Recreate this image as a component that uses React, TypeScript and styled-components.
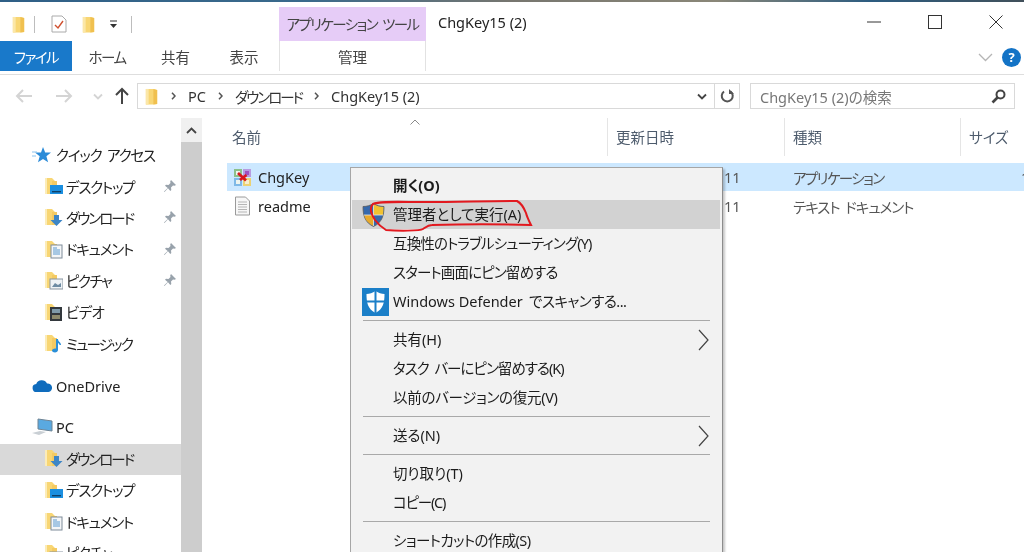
import React from "react";
import styled, { createGlobalStyle } from "styled-components";

const GlobalStyle = createGlobalStyle`
  html, body {
    margin: 0;
    padding: 0;
    background: #fff;
  }
`;

const Page = styled.div`
  position: relative;
  width: 1024px;
  height: 552px;
  overflow: hidden;
  background: #fff;
  color: #222;
  font-family: "Noto Sans", "Noto Sans CJK JP", sans-serif;
  font-size: 14.5px;
  font-feature-settings: "palt";
  filter: blur(0.3px);
`;

// katakana in the reference font runs narrower than Noto CJK, even with palt
const Tight = styled.span<{ $by: number }>`
  letter-spacing: ${(p) => -p.$by}px;
  word-spacing: 3px;
`;

const TopStrip = styled.div`
  height: 2px;
  background: linear-gradient(90deg, #2f5f86 0%, #3a6a8c 30%, #77766f 50%, #8a8778 70%, #2c5c80 85%, #41505a 100%);
`;

const TitleBar = styled.div`
  display: flex;
  align-items: flex-start;
  height: 39px;
`;

const QuickBar = styled.div`
  display: flex;
  align-items: center;
  width: 279px;
  height: 34px;
  margin-top: 5px;
  padding-left: 10px;
  box-sizing: border-box;
`;

const VLine = styled.span<{ $left: number }>`
  width: 1px;
  height: 17px;
  margin-left: ${(p) => p.$left}px;
  background: #bdbdbd;
`;

const QuickIcon = styled.span<{ $left: number }>`
  display: flex;
  margin-left: ${(p) => p.$left}px;
`;

const ToolTab = styled.div`
  width: 147px;
  height: 34px;
  margin-top: 5px;
  padding-bottom: 2px;
  box-sizing: border-box;
  display: flex;
  align-items: center;
  justify-content: center;
  background: #e6ccf7;
  color: #444;
  white-space: nowrap;
`;

const WindowTitle = styled.div`
  flex: 1;
  margin: 10px 0 0 12px;
  line-height: 20px;
`;

const WindowButtons = styled.div`
  display: flex;
  align-items: center;
  gap: 47px;
  height: 28px;
  margin: 6px 21px 0 0;
`;

const RibbonRow = styled.div`
  display: flex;
  height: 33px;
  border-bottom: 1px solid #dedede;
`;

const FileTab = styled.div`
  width: 72px;
  height: 30px;
  display: flex;
  align-items: center;
  justify-content: center;
  background: #1979ca;
  color: #fff;
`;

const RibbonTab = styled.div<{ $width: number }>`
  width: ${(p) => p.$width}px;
  height: 30px;
  display: flex;
  align-items: center;
  justify-content: center;
  color: #444;
`;

const ManageTab = styled(RibbonTab)`
  background: #fff;
  border-left: 1px solid #e2e2e2;
  border-right: 1px solid #e2e2e2;
  box-sizing: content-box;
`;

const RibbonEnd = styled.div`
  flex: 1;
  display: flex;
  justify-content: flex-end;
  align-items: center;
  gap: 9px;
  height: 32px;
  padding-right: 3px;
`;

const HelpDot = styled.div`
  width: 19px;
  height: 19px;
  border-radius: 50%;
  background: #1373c6;
  color: #fff;
  font-size: 13px;
  font-weight: 700;
  line-height: 19px;
  text-align: center;
`;

const AddressRow = styled.div`
  display: flex;
  align-items: center;
  height: 26px;
  margin-top: 8px;
  padding-left: 15px;
`;

const NavButton = styled.span<{ $width: number }>`
  width: ${(p) => p.$width}px;
  display: flex;
`;

const AddressBox = styled.div`
  width: 603px;
  height: 26px;
  box-sizing: border-box;
  border: 1px solid #d9d9d9;
  display: flex;
  align-items: center;
  padding-left: 5px;
  color: #333;
`;

const Crumbs = styled.div`
  flex: 1;
  display: flex;
  align-items: center;
  gap: 12px;
  margin-left: 11px;
`;

const AddressTail = styled.div`
  display: flex;
  align-items: center;
  height: 100%;
`;

const TailCell = styled.span<{ $line?: boolean }>`
  display: flex;
  align-items: center;
  justify-content: center;
  height: 100%;
  width: 24px;
  border-left: ${(p) => (p.$line ? "1px solid #d9d9d9" : "none")};
`;

const SearchBox = styled.div`
  width: 265px;
  height: 26px;
  box-sizing: border-box;
  margin-left: 10px;
  border: 1px solid #d9d9d9;
  display: flex;
  align-items: center;
  justify-content: space-between;
  padding: 0 8px 0 9px;
  color: #777;
`;

const Body = styled.div`
  display: flex;
  height: 434px;
  margin-top: 9px;
`;

const Sidebar = styled.div`
  width: 181px;
  padding-top: 22px;
  box-sizing: border-box;
  flex-shrink: 0;
`;

const NavRow = styled.div<{ $depth: number; $gap?: number; $selected?: boolean }>`
  display: flex;
  align-items: center;
  height: 31.4px;
  box-sizing: border-box;
  padding-bottom: 2px;
  margin-top: ${(p) => p.$gap ?? 0}px;
  padding-left: ${(p) => (p.$depth ? 44 : 32)}px;
  background: ${(p) => (p.$selected ? "#d9d9d9" : "transparent")};
  white-space: nowrap;
`;

const NavIcon = styled.span<{ $depth: number }>`
  display: flex;
  width: ${(p) => (p.$depth ? 22 : 24)}px;
`;

const PinMark = styled.span`
  display: flex;
  margin-left: auto;
  margin-right: 4px;
`;

const Track = styled.div`
  width: 21px;
  flex-shrink: 0;
  background: #cdcdcd;
`;

const TrackButton = styled.div`
  height: 24px;
  background: #f0f0f0;
  display: flex;
  align-items: center;
  justify-content: center;
`;

const Content = styled.div`
  flex: 1;
  min-width: 0;
  position: relative;
`;

const HeaderRow = styled.div`
  display: flex;
  height: 38px;
  margin-left: 22px;
  color: #4d5b6c;
`;

const HeaderCell = styled.div<{ $width: number }>`
  width: ${(p) => p.$width}px;
  box-sizing: border-box;
  padding-left: 8px;
  line-height: 38px;
  border-right: 1px solid #e5e5e5;
  flex-shrink: 0;
  position: relative;
  &:last-child {
    border-right: none;
  }
`;

const SortMark = styled.span`
  position: absolute;
  top: 1px;
  left: 186px;
  display: flex;
`;

const FileList = styled.div`
  margin: 7px 0 0 25px;
`;

const FileRow = styled.div<{ $selected?: boolean }>`
  display: flex;
  align-items: center;
  height: 28px;
  margin-bottom: 1px;
  background: ${(p) => (p.$selected ? "#cce8ff" : "transparent")};
  white-space: nowrap;
`;

const NameCell = styled.div`
  width: 381px;
  display: flex;
  align-items: center;
  gap: 6px;
  padding-left: 6px;
  box-sizing: border-box;
`;

const FileCell = styled.div<{ $width: number; $pad: number }>`
  width: ${(p) => p.$width}px;
  padding-left: ${(p) => p.$pad}px;
  box-sizing: border-box;
  color: #555;
  overflow: hidden;
`;

const Menu = styled.div`
  position: absolute;
  left: 350px;
  top: 167px;
  width: 373px;
  height: 392px;
  box-sizing: border-box;
  padding: 3px 1px;
  background: #f2f2f2;
  border: 1px solid #a6a6a6;
  border-right-color: #8c8c8c;
  box-shadow: 2px 2px 2px rgba(0, 0, 0, 0.22);
  color: #1c1c1c;
`;

const MenuItem = styled.div<{ $active?: boolean; $bold?: boolean }>`
  display: flex;
  align-items: center;
  height: 29px;
  box-sizing: border-box;
  padding-bottom: 2px;
  margin-right: 1px;
  padding-left: 41px;
  position: relative;
  background: ${(p) => (p.$active ? "#d2d2d2" : "transparent")};
  font-weight: ${(p) => (p.$bold ? 700 : 400)};
  white-space: nowrap;
`;

const MenuIcon = styled.span`
  position: absolute;
  left: 10px;
  top: 50%;
  transform: translateY(-50%);
  display: flex;
`;

const MenuArrow = styled.span`
  position: absolute;
  right: 11px;
  top: 50%;
  transform: translateY(-50%);
  display: flex;
`;

const MenuLine = styled.div`
  height: 9px;
  display: flex;
  align-items: center;
  padding: 0 11px;
  &::after {
    content: "";
    flex: 1;
    height: 1px;
    background: #a9a9a9;
  }
`;

const RedMark = styled.svg`
  position: absolute;
  left: 16px;
  top: 29px;
  pointer-events: none;
`;

const FolderIcon = ({ size = 17 }: { size?: number }) => (
  <svg width={size} height={size} viewBox="0 0 16 18">
    <path d="M2 1h8l4 1v15l-4 0.5H2z" fill="#f8d674" />
    <path d="M2 1h3v16.5H2z" fill="#fbe7a8" />
    <path d="M10 1l4 1v15l-4 0.5z" fill="#f0c04f" />
  </svg>
);

type Kind = "desktop" | "download" | "docs" | "pics" | "video" | "music";

const KnownFolder = ({ kind }: { kind: Kind }) => (
  <svg width="19" height="20" viewBox="0 0 19 20">
    <path d="M1 2h7l3 3h-3v13H1z" fill="#f8d674" />
    <path d="M1 2h2v16H1z" fill="#fcecb8" />
    <path d="M8 5h5v13H8z" fill="#f4ca62" />
    {kind === "desktop" && (
      <>
        <rect x="6" y="9" width="13" height="9" fill="#1b8fe0" />
        <rect x="8" y="15" width="9" height="1.4" fill="#0f3f66" />
      </>
    )}
    {kind === "download" && <path d="M10 8h5v5h3.500l-6 6-6-6H10z" fill="#3d86c6" />}
    {kind === "docs" && (
      <>
        <rect x="7" y="6" width="11" height="13" fill="#f4f6f8" stroke="#7f8c99" />
        <path d="M9 9h4M9 11h7M9 13h7M9 15h7" stroke="#5a9ad0" />
      </>
    )}
    {kind === "pics" && (
      <>
        <rect x="6" y="9" width="13" height="10" fill="#eef2f5" stroke="#8a96a1" />
        <path d="M8 17l3-4 3 2 3-2v4z" fill="#6d8ba3" />
      </>
    )}
    {kind === "video" && (
      <>
        <rect x="6" y="5" width="12" height="14" fill="#33383d" />
        <rect x="8" y="7" width="8" height="4" fill="#7f9aa9" />
        <rect x="8" y="13" width="8" height="4" fill="#8d8a6c" />
      </>
    )}
    {kind === "music" && (
      <path d="M12 6h2c0 3 3 3 3 6h-1.500c0-1-1-1.600-1.500-2v7c0 1.500-1.500 2.500-3 2.500S8 18.500 8 17.500s1.500-2 3-2c.4 0 .7 0 1 .1z" fill="#2a8fd8" />
    )}
  </svg>
);

const Pin = () => (
  <svg width="14" height="14" viewBox="0 0 14 14">
    <path d="M8 1l5 5-1.500.8-1.500-.3-2 2 .3 2.500-1 1-2.300-2.700L1.500 13 1 12.500l3.700-3.500L2 6.700l1-1 2.500.3 2-2-.3-1.500z" fill="#98a2ab" />
  </svg>
);

const Chevron = ({ color = "#555" }: { color?: string }) => (
  <svg width="10" height="7" viewBox="0 0 10 7">
    <path d="M1 1.500l4 4 4-4" fill="none" stroke={color} strokeWidth="1.800" />
  </svg>
);

const CrumbArrow = () => (
  <svg width="5" height="8" viewBox="0 0 5 8">
    <path d="M1 0.800L4 4 1 7.200" fill="none" stroke="#555" strokeWidth="1.500" />
  </svg>
);

const ArrowIcon = ({ dir, color }: { dir: "left" | "right" | "up"; color: string }) => {
  const r = dir === "left" ? 180 : dir === "up" ? -90 : 0;
  return (
    <svg width="18" height="16" viewBox="0 0 18 16" style={{ transform: `rotate(${r}deg)` }}>
      <path d="M1 8h15M10 2l6 6-6 6" fill="none" stroke={color} strokeWidth="2" />
    </svg>
  );
};

const Shield = () => (
  <svg width="23" height="25" viewBox="0 0 23 25">
    <path d="M11.500 1C8 3 5 4 1 4c0 9 2 16 10.500 20C20 20 22 13 22 4c-4 0-7.500-1-10.500-3z" fill="#3569ad" stroke="#5b5b5b" strokeWidth="0.800" />
    <path d="M11.500 1.500c3 2 6.500 2.800 10 3 0 2.800-.2 5.400-.7 8H11.500z" fill="#f2c230" />
    <path d="M11.500 12.500H2.200c1 4.800 3.500 8.300 9.300 11z" fill="#e8a92b" />
    <path d="M11.500 1.500v22M2 12.500h19" stroke="#e9e9e9" strokeWidth="0.800" />
  </svg>
);

const Defender = () => (
  <svg width="27" height="28" viewBox="0 0 27 28">
    <rect width="27" height="28" fill="#1b7fc8" />
    <path d="M13.500 3c3 2 6 3 9 3 0 8-1 15-9 19-8-4-9-11-9-19 3 0 6-1 9-3z" fill="#fff" />
    <path d="M13.500 2v24M3 13.500h21" stroke="#1b7fc8" strokeWidth="2" />
  </svg>
);

const AppIcon = () => (
  <svg width="19" height="19" viewBox="0 0 19 19">
    <rect x="1" y="1" width="8" height="8" fill="#8cc08a" />
    <rect x="10" y="1" width="8" height="8" fill="#b79be0" />
    <rect x="1" y="10" width="8" height="8" fill="#7fb9e6" />
    <rect x="10" y="10" width="8" height="8" fill="#ecd273" />
    <rect x="3" y="3" width="4" height="4" fill="#eef4ee" />
    <rect x="12" y="3" width="4" height="4" fill="#a14fc0" />
    <rect x="3" y="12" width="4" height="4" fill="#eef4ee" />
    <rect x="12" y="12" width="4" height="4" fill="#f6efcf" />
    <path d="M5 5l8 7.500M13.500 7L7 12" stroke="#d8161d" strokeWidth="2.800" fill="none" />
  </svg>
);

const TextFile = () => (
  <svg width="19" height="20" viewBox="0 0 19 20">
    <path d="M2.500 1h10l4 4v14h-14z" fill="#f7f7f7" stroke="#9a9a9a" />
    <path d="M5 6h9M5 8.500h9M5 11h9M5 13.500h9M5 16h9" stroke="#b5b5b5" />
  </svg>
);

const Caret = () => (
  <svg width="11" height="22" viewBox="0 0 11 22">
    <path d="M1 1l9 10-9 10" fill="none" stroke="#444" strokeWidth="1.200" />
  </svg>
);

const quickItems: { label: string; kind: Kind; tight: number; pin?: boolean }[] = [
  { label: "デスクトップ", kind: "desktop", tight: 1.2, pin: true },
  { label: "ダウンロード", kind: "download", tight: 2, pin: true },
  { label: "ドキュメント", kind: "docs", tight: 1.2, pin: true },
  { label: "ピクチャ", kind: "pics", tight: 1.5, pin: true },
  { label: "ビデオ", kind: "video", tight: 0.7 },
  { label: "ミュージック", kind: "music", tight: 1.8 },
];

const pcItems: { label: string; kind: Kind; tight: number; selected?: boolean }[] = [
  { label: "ダウンロード", kind: "download", tight: 2, selected: true },
  { label: "デスクトップ", kind: "desktop", tight: 1.2 },
  { label: "ドキュメント", kind: "docs", tight: 1.2 },
  { label: "ピクチャ", kind: "pics", tight: 1.5 },
];

const App = () => {
  return (
    <Page>
      <GlobalStyle />
      <TopStrip />
      <TitleBar>
        <QuickBar>
          <FolderIcon />
          <VLine $left={7} />
          <QuickIcon $left={16}>
            <svg width="16" height="18" viewBox="0 0 16 18">
              <path d="M1 1h10l4 4v12H1z" fill="#fff" stroke="#aaa" />
              <path d="M4 10l3 3 5-7" fill="none" stroke="#d0502f" strokeWidth="1.400" />
            </svg>
          </QuickIcon>
          <QuickIcon $left={13}>
            <FolderIcon />
          </QuickIcon>
          <QuickIcon $left={12}>
            <svg width="9" height="8" viewBox="0 0 9 8">
              <path d="M1 1h7" stroke="#333" />
              <path d="M1 4h7L4.500 8z" fill="#333" />
            </svg>
          </QuickIcon>
          <VLine $left={13} />
        </QuickBar>
        <ToolTab>
          <Tight $by={1.6}>アプリケーション ツール</Tight>
        </ToolTab>
        <WindowTitle>ChgKey15 (2)</WindowTitle>
        <WindowButtons>
          <svg width="14" height="14" viewBox="0 0 14 14">
            <path d="M0 7h14" stroke="#333" />
          </svg>
          <svg width="14" height="14" viewBox="0 0 14 14">
            <rect x="0.500" y="0.500" width="13" height="13" fill="none" stroke="#333" />
          </svg>
          <svg width="14" height="14" viewBox="0 0 14 14">
            <path d="M0.500 0.500l13 13M13.500 0.500l-13 13" stroke="#333" />
          </svg>
        </WindowButtons>
      </TitleBar>
      <RibbonRow>
        <FileTab>
          <Tight $by={1.5}>ファイル</Tight>
        </FileTab>
        <RibbonTab $width={70}>
          <Tight $by={1.5}>ホーム</Tight>
        </RibbonTab>
        <RibbonTab $width={67}>共有</RibbonTab>
        <RibbonTab $width={70}>表示</RibbonTab>
        <ManageTab $width={145}>管理</ManageTab>
        <RibbonEnd>
          <svg width="15" height="9" viewBox="0 0 15 9">
            <path d="M1 1l6.500 6.500L14 1" fill="none" stroke="#b5b5b5" strokeWidth="1.300" />
          </svg>
          <HelpDot>?</HelpDot>
        </RibbonEnd>
      </RibbonRow>
      <AddressRow>
        <NavButton $width={40}>
          <ArrowIcon dir="left" color="#d4d4d4" />
        </NavButton>
        <NavButton $width={38}>
          <ArrowIcon dir="right" color="#d4d4d4" />
        </NavButton>
        <NavButton $width={20}>
          <Chevron color="#d4d4d4" />
        </NavButton>
        <NavButton $width={24}>
          <ArrowIcon dir="up" color="#444" />
        </NavButton>
        <AddressBox>
          <FolderIcon />
          <Crumbs>
            <CrumbArrow />
            <span>PC</span>
            <CrumbArrow />
            <Tight $by={2}>ダウンロード</Tight>
            <CrumbArrow />
            <span>ChgKey15 (2)</span>
          </Crumbs>
          <AddressTail>
            <TailCell>
              <Chevron color="#444" />
            </TailCell>
            <TailCell $line>
              <svg width="15" height="15" viewBox="0 0 15 15">
                <path d="M4 2.500a5.500 5.500 0 1 0 6.500 0" fill="none" stroke="#555" strokeWidth="2" />
                <path d="M9 0v5h5z" fill="#555" />
              </svg>
            </TailCell>
          </AddressTail>
        </AddressBox>
        <SearchBox>
          <span>ChgKey15 (2)の検索</span>
          <svg width="15" height="15" viewBox="0 0 15 15">
            <circle cx="9.500" cy="5.500" r="4" fill="none" stroke="#444" strokeWidth="2" />
            <path d="M6.500 8.500L1.500 13.500" stroke="#444" strokeWidth="2.600" />
          </svg>
        </SearchBox>
      </AddressRow>
      <Body>
        <Sidebar>
          <NavRow $depth={0}>
            <NavIcon $depth={0}>
              <svg width="19" height="18" viewBox="0 0 19 18">
                <path d="M11 1l2.200 5.500H19l-4.600 3.700 1.700 6L11 13l-5 3.200 1.700-6L3 6.500h6z" fill="#2b8bd8" />
                <path d="M0 6h5M0 10h4" stroke="#8cc3ee" />
              </svg>
            </NavIcon>
            <Tight $by={1.2}>クイック アクセス</Tight>
          </NavRow>
          {quickItems.map((item) => (
            <NavRow $depth={1} key={item.label}>
              <NavIcon $depth={1}>
                <KnownFolder kind={item.kind} />
              </NavIcon>
              <Tight $by={item.tight}>{item.label}</Tight>
              {item.pin && (
                <PinMark>
                  <Pin />
                </PinMark>
              )}
            </NavRow>
          ))}
          <NavRow $depth={0} $gap={11.6}>
            <NavIcon $depth={0}>
              <svg width="21" height="14" viewBox="0 0 21 14">
                <path d="M5 13a4 4 0 0 1-.8-8A6 6 0 0 1 15 4.500 4.300 4.300 0 0 1 16.500 13z" fill="#0f6cbd" />
              </svg>
            </NavIcon>
            OneDrive
          </NavRow>
          <NavRow $depth={0} $gap={9.6}>
            <NavIcon $depth={0}>
              <svg width="21" height="18" viewBox="0 0 21 18">
                <path d="M6 1l14 2v10L6 11z" fill="#5aa9e0" stroke="#6f8494" />
                <path d="M0 15l8-2 6 1-7 3z" fill="#c9cfd4" />
              </svg>
            </NavIcon>
            PC
          </NavRow>
          {pcItems.map((item) => (
            <NavRow $depth={1} $selected={item.selected} key={item.label}>
              <NavIcon $depth={1}>
                <KnownFolder kind={item.kind} />
              </NavIcon>
              <Tight $by={item.tight}>{item.label}</Tight>
            </NavRow>
          ))}
        </Sidebar>
        <Track>
          <TrackButton>
            <svg width="11" height="7" viewBox="0 0 11 7">
              <path d="M1 6l4.500-4.500L10 6" fill="none" stroke="#444" strokeWidth="1.800" />
            </svg>
          </TrackButton>
        </Track>
        <Content>
          <HeaderRow>
            <HeaderCell $width={384}>
              名前
              <SortMark>
                <svg width="10" height="6" viewBox="0 0 10 6">
                  <path d="M0.500 5.500L5 1l4.500 4.500" fill="none" stroke="#8a8a8a" />
                </svg>
              </SortMark>
            </HeaderCell>
            <HeaderCell $width={177}>更新日時</HeaderCell>
            <HeaderCell $width={176}>種類</HeaderCell>
            <HeaderCell $width={63}>サイズ</HeaderCell>
          </HeaderRow>
          <FileList>
            <FileRow $selected>
              <NameCell>
                <AppIcon />
                ChgKey
              </NameCell>
              <FileCell $width={177} $pad={116}>
                11
              </FileCell>
              <FileCell $width={176} $pad={8}>
                <Tight $by={1.6}>アプリケーション</Tight>
              </FileCell>
              <FileCell $width={63} $pad={60}>
                1
              </FileCell>
            </FileRow>
            <FileRow>
              <NameCell>
                <TextFile />
                readme
              </NameCell>
              <FileCell $width={177} $pad={116}>
                11
              </FileCell>
              <FileCell $width={176} $pad={8}>
                <Tight $by={1}>テキスト ドキュメント</Tight>
              </FileCell>
            </FileRow>
          </FileList>
        </Content>
      </Body>
      <Menu>
        <MenuItem $bold>開く(O)</MenuItem>
        <MenuItem $active>
          <MenuIcon>
            <Shield />
          </MenuIcon>
          管理者として実行(A)
        </MenuItem>
        <MenuItem>
          <Tight $by={0.85}>互換性のトラブルシューティング(Y)</Tight>
        </MenuItem>
        <MenuItem>
          <Tight $by={0.85}>スタート画面にピン留めする</Tight>
        </MenuItem>
        <MenuItem>
          <MenuIcon>
            <Defender />
          </MenuIcon>
          Windows Defender <Tight $by={0.5}>&nbsp;でスキャンする...</Tight>
        </MenuItem>
        <MenuLine />
        <MenuItem>
          共有(H)
          <MenuArrow>
            <Caret />
          </MenuArrow>
        </MenuItem>
        <MenuItem>
          <Tight $by={1}>タスク バーにピン留めする(K)</Tight>
        </MenuItem>
        <MenuItem>
          <Tight $by={0.3}>以前のバージョンの復元(V)</Tight>
        </MenuItem>
        <MenuLine />
        <MenuItem>
          送る(N)
          <MenuArrow>
            <Caret />
          </MenuArrow>
        </MenuItem>
        <MenuLine />
        <MenuItem>切り取り(T)</MenuItem>
        <MenuItem>
          <Tight $by={1.2}>コピー(C)</Tight>
        </MenuItem>
        <MenuLine />
        <MenuItem>
          <Tight $by={0.6}>ショートカットの作成(S)</Tight>
        </MenuItem>
        <RedMark width="170" height="38" viewBox="0 0 170 38">
          <path
            d="M6 7C12 4 30 5 60 5c30 0 60-1 90-1 4 2 7 7 9 12 1 4 3 8 5 12-30-1-68-1-99 0-4 0-6 2-9 4-3 2-25 2-37 1-5-3-8-6-11-10C4 17 2 11 6 7z"
            fill="none"
            stroke="#e2191f"
            strokeWidth="2"
          />
        </RedMark>
      </Menu>
    </Page>
  );
};

export default App;
